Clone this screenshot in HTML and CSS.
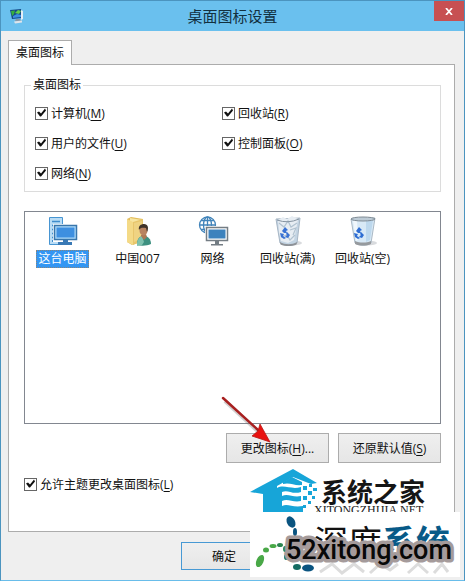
FILE: index.html
```html
<!doctype html>
<html lang="zh-CN">
<head>
<meta charset="utf-8">
<meta name="viewport" content="width=device-width, initial-scale=1">
<title>桌面图标设置</title>
<link rel="stylesheet" href="styles.css">
</head>

<body>
<div class="window">
	<!-- 标题栏 -->
	<header class="titlebar">
		<svg class="app-icon" width="16" height="16" viewBox="0 0 16 16">
			<path d="M1 2l11-1 1 9-10 1z" fill="#174a86"/>
			<path d="M2 3l4-.5L5 6 3 8z" fill="#36b03c"/>
			<path d="M6 5l3-3 3 1-2 3z" fill="#5fd04a"/>
			<path d="M4 8l4-2 4 1v2l-8 1z" fill="#3d8de0"/>
			<path d="M12 2l2 1v8l-2 1z" fill="#e4eef6"/>
			<path d="M7 11h4l1 2H6z" fill="#8798a8"/>
			<path d="M5 13.500l8-1v2l-7 1z" fill="#dfe4ea"/>
		</svg>
		<h1 class="title">桌面图标设置</h1>
		<button type="button" class="close" aria-label="关闭">
			<svg width="8" height="7" viewBox="0 0 8 7"><path d="M1 0l6 7M7 0L1 7" stroke="#fff" stroke-width="1.700"/></svg>
		</button>
	</header>

	<!-- 选项卡 -->
	<div class="tabs" role="tablist">
		<button type="button" class="tab" role="tab" aria-selected="true">桌面图标</button>
	</div>

	<main class="panel">
		<fieldset class="group">
			<legend>桌面图标</legend>
			<div class="checks">
				<label class="check"><input type="checkbox" checked><span>计算机(<u>M</u>)</span></label>
				<label class="check"><input type="checkbox" checked><span>回收站(<u>R</u>)</span></label>
				<label class="check"><input type="checkbox" checked><span>用户的文件(<u>U</u>)</span></label>
				<label class="check"><input type="checkbox" checked><span>控制面板(<u>O</u>)</span></label>
				<label class="check"><input type="checkbox" checked><span>网络(<u>N</u>)</span></label>
			</div>
		</fieldset>

		<!-- 图标列表 -->
		<ul class="icons" role="listbox">
			<li class="active" role="option" aria-selected="true">
				<svg width="32" height="32" viewBox="0 0 32 32">
					<path d="M2.500 2.500h13v27h-13z" fill="#b9dcf5" stroke="#4795d2"/>
					<path d="M5 6.500h8M5 10.500h5M5 14.500h3M5 18.500h3M5 22.500h3" stroke="#3f8ccb" stroke-width="1.500"/>
					<path d="M5 26h3" stroke="#3f8ccb" stroke-width="2"/>
					<path d="M6 9h25v18H6z" fill="#fff"/>
					<path d="M7.500 10.500h22v14h-22z" fill="#aedbfa" stroke="#3976ac" stroke-width="1.500"/>
					<path d="M9.500 12.500h18v10h-18z" fill="#3e8fe0"/>
					<path d="M16 25h5v2h4v3H11v-3h5z" fill="#3979b5"/>
				</svg>
				<span>这台电脑</span>
			</li>
			<li role="option">
				<svg width="32" height="32" viewBox="0 0 32 32">
					<path d="M5 4l4-2 12 2v22l-11 4-5-3z" fill="#e3bd5b"/>
					<path d="M8 3l12 2v20L8 28z" fill="#f7e6a2"/>
					<path d="M5 4l6 3v23l-6-3z" fill="#f4da87"/>
					<path d="M11 7l10-3v22l-10 4z" fill="#e8c66c"/>
					<path d="M12 8l8-2v18l-8 3z" fill="#efd382"/>
					<path d="M15 30c0-6 2-9 7-9 4 0 7 3 7 8-4 2-10 2-14 1z" fill="#3d9080"/>
					<path d="M15 28c1-4 2-6 5-7l2 6-2 3-5 1z" fill="#7fc1ae"/>
					<path d="M19 20l5-1 1 3-3 3-3-4z" fill="#ad7855"/>
					<ellipse cx="21.500" cy="15.500" rx="4" ry="5" fill="#b98360"/>
					<path d="M17 15c-1-4 2-6 5-6 4 0 5 4 3 8l-1-4c-3 0-5-1-7 2z" fill="#3f3329"/>
				</svg>
				<span>中国007</span>
			</li>
			<li role="option">
				<svg width="32" height="32" viewBox="0 0 32 32">
					<g fill="none" stroke="#4284ba" stroke-width="1.300">
						<circle cx="10.500" cy="10" r="8"/>
						<ellipse cx="10.500" cy="10" rx="4" ry="8"/>
						<path d="M10.500 2v16M2.500 10h16M4 5.500h13M4 14.500h13"/>
					</g>
					<path d="M8 11h24v18H8z" fill="#fff"/>
					<path d="M9.500 12.500h21v13h-21z" fill="#fff" stroke="#747d84" stroke-width="1.500"/>
					<path d="M11.500 14.500h17v9h-17z" fill="#3d82bd"/>
					<path d="M18 26h4v3h4v1.500H14V29h4z" fill="#747d84"/>
				</svg>
				<span>网络</span>
			</li>
			<li role="option">
				<svg width="32" height="32" viewBox="0 0 32 32">
					<ellipse cx="20" cy="28" rx="10" ry="2.500" fill="#d9dbde"/>
					<path d="M4 4l24-1-3 25c-4 3-13 3-17 0z" fill="#c3d4e3" stroke="#a7b6c5"/>
					<path d="M6 5l5-3 4 2 5-3 6 3-2 11-2 10-6 3-7-2-2-9z" fill="#e7edf3"/>
					<path d="M7 8l5 4 4-6 3 6 6-4M9 22l6-2 3 5 5-5M18 15l6-2-3 7" fill="none" stroke="#b1c2d0" stroke-width="1.200"/>
					<path d="M5 5q11 4 22-1" fill="none" stroke="#8593a1"/>
					<path d="M8 27c5 3 12 3 17 0l-.5 2.500c-5 2-11 2-16 0z" fill="#8e9297"/>
					<g fill="#3972d4"><path d="M10 16l3-4 3 3-2 1 1 2h-3z"/><path d="M8 18l4 1-1 2 3 2-2 1-3-2z"/><path d="M15 17l3 3-2 3-3-1 2-2-1-1z"/></g>
				</svg>
				<span>回收站(满)</span>
			</li>
			<li role="option">
				<svg width="32" height="32" viewBox="0 0 32 32">
					<ellipse cx="20" cy="28" rx="10" ry="2.500" fill="#d9dbde"/>
					<path d="M4 4l24-1-4 25c-4 3-12 3-16 0z" fill="#d8e9f6" stroke="#abb9c5"/>
					<path d="M19 6l7-1-3 20-4 2z" fill="#bdd8ed"/>
					<path d="M6 6h4l1 19-2 1z" fill="#f0f7fc"/>
					<ellipse cx="16" cy="4" rx="12" ry="2" fill="#bdcbd6" stroke="#7f8b95"/>
					<path d="M8 26c5 2 11 2 16 0v3c-5 2-11 2-16 0z" fill="#969a9e"/>
					<g fill="#2e6dd2"><path d="M9 16l3-4 3 3-2 1 1 2h-3z"/><path d="M7 18l4 1-1 2 3 2-2 1-3-2z"/><path d="M14 17l3 3-2 3-3-1 2-2-1-1z"/></g>
				</svg>
				<span>回收站(空)</span>
			</li>
		</ul>

		<div class="actions">
			<div class="pointed">
				<button type="button" class="btn">更改图标(<u>H</u>)...</button>
				<svg class="arrow" width="60" height="54" viewBox="220 394 60 54">
					<path d="M226 401l36 33" stroke="#777" stroke-opacity=".35" stroke-width="4"/>
					<path d="M224 398l35 32" stroke="#a82020" stroke-width="2.500" stroke-linecap="round"/>
					<path d="M271 442l-18-6 6-5 2-7z" fill="#e81210" stroke="#b51a18" stroke-width=".8"/>
				</svg>
			</div>
			<button type="button" class="btn">还原默认值(<u>S</u>)</button>
		</div>

		<label class="check theme"><input type="checkbox" checked><span>允许主题更改桌面图标(<u>L</u>)</span></label>
	</main>

	<footer class="footer">
		<button type="button" class="btn ok">确定</button>
	</footer>

	<!-- 水印 -->
	<svg class="watermark" width="210" height="112" viewBox="250 465 210 112">
		<g fill="#17a5d8">
			<path d="M250 492l43-23 24 14-6 1-18-7-16 9v26h-14v-18z"/>
			<path d="M277 488c7-4 14 2 24-1v5c-9 3-13-3-19 0v4c6-3 11 2 19 0v5c-8 2-13-3-19 0v5c6-3 10 2 21 0v6h-38v-4h12z"/>
			<path d="M283 482l9-5 10 5v3c-8 1-12-3-19-1z"/>
			<path d="M303 486h4v4h-4zM309 484h3v3h-3zM308 491h4v4h-4zM303 496h4v4h-4zM313 488h4v3h-4zM312 496h3v3h-3zM308 501h3v3h-3zM303 505h3v3h-3z"/>
		</g>
		<text class="wm-name" x="321" y="502">系统之家</text>
		<text class="wm-net" x="314" y="514">XITONGZHIJIA.NET</text>

		<path d="M250 512h210v65H250z" fill="#fff"/>
		<g fill="#0a5480">
			<ellipse cx="291" cy="522" rx="4" ry="6" transform="rotate(-28 291 522)"/>
			<ellipse cx="295" cy="532" rx="2" ry="4"/>
			<ellipse cx="308" cy="568" rx="6" ry="3.500"/>
			<ellipse cx="297" cy="567" rx="4" ry="3" fill="#146b62"/>
		</g>
		<g fill="#49a847">
			<ellipse cx="260" cy="561" rx="3.500" ry="6.500" transform="rotate(24 260 561)"/>
			<ellipse cx="266" cy="550" rx="3" ry="2.500"/>
			<ellipse cx="273" cy="546" rx="3.500" ry="2"/>
			<ellipse cx="280" cy="545" rx="3" ry="2" fill="#2c8650"/>
			<ellipse cx="285" cy="549" rx="2" ry="3" fill="#2c8650"/>
			<ellipse cx="286" cy="557" rx="2" ry="3" fill="#217558"/>
		</g>
		<text class="wm-deep" x="314" y="555">深度<tspan class="wm-sys">系统</tspan></text>
		<path d="M320 572l12-8 10 9 12-9 10 8M370 573l10-9 10 6 8-6M408 573l10-9 10 9M434 573l8-9 6 8" fill="none" stroke="#dcdcdc" stroke-width="3"/>
		<text class="wm-site" x="286" y="559">52xitong.com</text>
	</svg>
</div>
</body>
</html>
```

FILE: styles.css
```css
*{ margin:0; padding:0; box-sizing:border-box; list-style:none;}
body{ background:#efefef; color:#111; font:12px/18px "Open Sans","Noto Sans CJK SC",sans-serif;}
button,input{ font:inherit; color:inherit;}
svg{ display:block;}
u{ text-decoration:underline; text-underline-offset:2px;}

.window{ position:relative; display:flex; flex-direction:column; min-height:100vh; border:1px solid #4b94bf; border-bottom-color:#69bdea; background:#efefef; overflow:hidden;}

/* 标题栏 */
.titlebar{ display:grid; grid-template-columns:1fr auto 1fr; align-items:center; height:30px; background:#6ac0ee;}
.app-icon{ margin-left:8px;}
.title{ font-size:15px; line-height:30px; font-weight:normal; color:#12303f;}
.close{ display:flex; align-items:center; justify-content:center; align-self:start; justify-self:end; width:30px; height:20px; border:0; background:#c75052;}

/* 选项卡 */
.tabs{ display:flex; padding:9px 7px 0;}
.tab{ position:relative; z-index:1; width:64px; height:25px; margin-bottom:-1px; border:1px solid #acacac; border-bottom:0; background:#fff; line-height:22px;}
.panel{ flex:1; margin:0 9px 0 7px; padding:12px 13px 36px 15px; border:1px solid #acacac; background:#fff;}

/* 复选框 */
.group{ padding:10px 10px 8px; border:1px solid #dcdcdc;}
.group legend{ margin-left:-4px; padding:0 2px; line-height:16px;}
.checks{ display:grid; grid-template-columns:187px 1fr; row-gap:10px;}
.check{ display:flex; align-items:center; gap:3px; height:20px;}
.check span{ padding-top:2px;}
.check input{ display:block; width:13px; height:13px; border:1px solid #666; background:#fff; appearance:none;}
.check input:checked::after{ content:""; display:block; width:11px; height:11px; background:#111; clip-path:polygon(1px 5px,3px 4px,5px 6px,9px 1px,10px 3px,5px 9px,4px 9px);}

/* 图标列表 */
.icons{ display:flex; flex-wrap:wrap; align-content:flex-start; min-height:213px; margin-top:19px; padding-top:3px; border:1px solid #828790; background:#fff;}
.icons li{ display:flex; flex-direction:column; align-items:center; gap:3px; width:75px;}
.icons span{ padding:0 2px; white-space:nowrap;}
.icons .active span{ background:#3396f3; color:#fff; outline:1px dotted #8c8378; outline-offset:-1px;}

/* 按钮 */
.actions{ display:flex; justify-content:flex-end; gap:9px; margin-top:9px;}
.btn{ display:block; width:103px; height:30px; padding-top:1px; border:1px solid #acacac; background:linear-gradient(#efefef,#e6e6e6); line-height:18px;}
.pointed{ position:relative;}
.arrow{ position:absolute; left:-7px; top:-39px; pointer-events:none;}
.theme{ margin-top:11px;}

.footer{ display:grid; grid-template-columns:1fr 86px 86px 86px; column-gap:8px; padding:10px 9px;}
.ok{ grid-column:2; width:auto; height:28px; border-color:#4799d4;}

/* 水印 */
.watermark{ position:absolute; right:4px; bottom:3px; pointer-events:none;}
.wm-name{ font:bold 26px "Noto Sans CJK SC",sans-serif; fill:#151515;}
.wm-net{ font:12px "Liberation Serif",serif; fill:#222;}
.wm-deep{ font:34px "Noto Sans CJK SC",sans-serif; fill:#111;}
.wm-sys{ font-weight:bold; fill:#075a88;}
.wm-site{ font:500 27px Roboto,sans-serif; fill:#080808; stroke:#a59b9b; stroke-width:7px; stroke-linejoin:round; paint-order:stroke;}
```
